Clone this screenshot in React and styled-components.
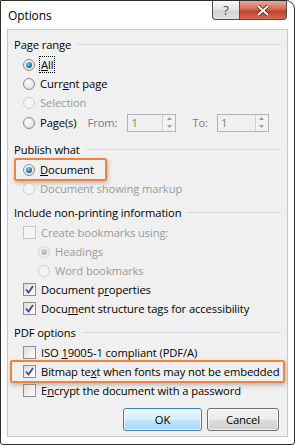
import React from 'react';
import styled, { createGlobalStyle } from 'styled-components';

const Global = createGlobalStyle`
  body {
    margin: 0;
    background: #ffffff;
    font-family: "Open Sans", "Noto Sans", sans-serif;
  }
`;

const Window = styled.div`
  width: 295px;
  height: 445px;
  box-sizing: border-box;
  border: 1px solid #2e2e2e;
  border-radius: 0 9px 3px 3px;
  background: #ffffff;
  display: flex;
  flex-direction: column;
  overflow: hidden;
`;

const TitleBar = styled.div`
  height: 28px;
  display: flex;
  align-items: flex-start;
  padding: 0 7px 0 7px;
`;

const Title = styled.div`
  flex: 1;
  font-size: 12px;
  letter-spacing: -0.1px;
  line-height: 29px;
  color: #000;
`;

const CaptionButton = styled.div`
  height: 19px;
  width: ${(p) => p.w}px;
  box-sizing: border-box;
  border: 1px solid #4f4f4f;
  border-top: none;
  display: flex;
  align-items: center;
  justify-content: center;
  background: ${(p) =>
    p.close
      ? 'linear-gradient(#e9a99b, #d0634f 50%, #c0402a 55%, #d36b58)'
      : 'linear-gradient(#f7f7f7, #e3e3e3 50%, #d2d2d2 55%, #e0e0e0)'};
  border-bottom-left-radius: ${(p) => (p.close ? 0 : 4)}px;
  border-bottom-right-radius: ${(p) => (p.close ? 4 : 0)}px;
  border-left: ${(p) => (p.close ? 'none' : '1px solid #4f4f4f')};
  font-size: 13px;
  color: #444;
`;

const Panel = styled.div`
  flex: 1;
  margin: 0 6px 7px 6px;
  border: 1px solid #c9c9c9;
  background: #f0f0f0;
  padding: 4px 6px 0 6px;
  display: flex;
  flex-direction: column;
  font-size: 11.2px;
  letter-spacing: -0.1px;
  color: #000;
`;

const Header = styled.div`
  height: 20px;
  display: flex;
  align-items: center;
  gap: 6px;
  margin-top: ${(p) => p.mt || 0}px;
  margin-bottom: 1px;

  &::after {
    content: '';
    flex: 1;
    height: 1px;
    background: #d5dce3;
  }
`;

const Row = styled.div`
  height: ${(p) => p.h || 19}px;
  display: flex;
  align-items: center;
  padding-left: ${(p) => (p.indent ? 24 : 9)}px;
  color: ${(p) => (p.disabled ? '#9a9a9a' : '#000')};
`;

const Item = styled.span`
  position: relative;
  display: inline-flex;
  align-items: center;
  gap: 5px;
`;

const Highlight = styled.span`
  position: absolute;
  left: ${(p) => p.l}px;
  right: ${(p) => p.r}px;
  top: -4px;
  bottom: -4px;
  border: 2px solid #f0833e;
  border-radius: 2px;
  box-shadow: 1px 2px 4px rgba(0, 0, 0, 0.25);
  pointer-events: none;
`;

const Radio = styled.span`
  width: 12px;
  height: 12px;
  border-radius: 50%;
  box-sizing: border-box;
  border: 1px solid ${(p) => (p.disabled ? '#cfcfcf' : '#8c8c8c')};
  background: ${(p) =>
    p.disabled
      ? '#f4f4f4'
      : 'radial-gradient(circle at 40% 35%, #ffffff, #e2e2e2 70%, #cfcfcf)'};
  display: flex;
  align-items: center;
  justify-content: center;
  flex-shrink: 0;

  &::after {
    content: '';
    display: ${(p) => (p.checked ? 'block' : 'none')};
    width: 6px;
    height: 6px;
    border-radius: 50%;
    background: ${(p) =>
      p.disabled
        ? 'radial-gradient(circle at 40% 35%, #d8d8d8, #9c9c9c)'
        : 'radial-gradient(circle at 40% 35%, #7fd0f5, #1f6fa8 60%, #0e3f6a)'};
  }
`;

const Box = styled.span`
  width: 13px;
  height: 13px;
  box-sizing: border-box;
  border: 1px solid ${(p) => (p.disabled ? '#c6c6c6' : '#8e8f8f')};
  background: ${(p) => (p.disabled ? '#f4f4f4' : 'linear-gradient(135deg, #dcdcdc, #ffffff)')};
  display: flex;
  align-items: center;
  justify-content: center;
  flex-shrink: 0;
`;

const Label = styled.span`
  white-space: nowrap;
  ${(p) => p.focus && 'outline: 1px dotted #000; outline-offset: 0px; padding: 0 1px;'}
`;

const Field = styled.span`
  display: inline-flex;
  width: ${(p) => p.w}px;
  height: 18px;
  box-sizing: border-box;
  border: 1px solid #b4b4b4;
  background: #f0f0f0;
  margin-left: ${(p) => p.ml}px;
  color: #8a7a66;
`;

const FieldText = styled.span`
  flex: 1;
  padding-left: 3px;
  line-height: 16px;
`;

const Spin = styled.span`
  width: 12px;
  border-left: 1px solid #d0d0d0;
  display: flex;
  flex-direction: column;
  justify-content: space-around;
  align-items: center;
  background: #f2f2f2;
`;

const Dim = styled.span`
  color: #7a7a7a;
  margin-left: ${(p) => p.ml}px;
`;

const Buttons = styled.div`
  display: flex;
  justify-content: flex-end;
  gap: 5px;
  margin-top: 8px;
  padding-right: 2px;
`;

const Button = styled.div`
  width: ${(p) => p.w}px;
  height: 23px;
  box-sizing: border-box;
  border-radius: 3px;
  border: 1px solid ${(p) => (p.primary ? '#3c7fb1' : '#707070')};
  background: ${(p) =>
    p.primary
      ? 'linear-gradient(#eaf6fd, #d9f0fc 50%, #bee6fd 51%, #a7d9f5)'
      : 'linear-gradient(#f2f2f2, #ebebeb 50%, #dddddd 51%, #cfcfcf)'};
  box-shadow: inset 0 0 0 1px rgba(255, 255, 255, 0.7);
  display: flex;
  align-items: center;
  justify-content: center;
`;

const Check = () => (
  <svg width="9" height="9" viewBox="0 0 9 9">
    <path d="M1 4.5 L3.5 7.5 L8 1" fill="none" stroke="#3b4f8c" strokeWidth="1.8" />
  </svg>
);

const Arrow = ({ up }) => (
  <svg width="5" height="3" viewBox="0 0 5 3">
    <path d={up ? 'M0 3 L2.5 0 L5 3 Z' : 'M0 0 L2.5 3 L5 0 Z'} fill="#9a9a9a" />
  </svg>
);

const SpinField = ({ w, ml }) => (
  <Field w={w} ml={ml}>
    <FieldText>1</FieldText>
    <Spin>
      <Arrow up />
      <Arrow />
    </Spin>
  </Field>
);

export default function App() {
  return (
    <>
      <Global />
      <Window>
        <TitleBar>
          <Title>Options</Title>
          <CaptionButton w={28}>?</CaptionButton>
          <CaptionButton w={47} close>
            <svg width="14" height="11" viewBox="0 0 14 11">
              <path d="M2 1 L12 10 M12 1 L2 10" stroke="#5a1a10" strokeWidth="3.6" />
              <path d="M2 1 L12 10 M12 1 L2 10" stroke="#ffffff" strokeWidth="2" />
            </svg>
          </CaptionButton>
        </TitleBar>
        <Panel>
          <Header>Page range</Header>
          <Row>
            <Item>
              <Radio checked />
              <Label focus><u>A</u>ll</Label>
            </Item>
          </Row>
          <Row>
            <Item>
              <Radio />
              <Label>Curr<u>e</u>nt page</Label>
            </Item>
          </Row>
          <Row disabled>
            <Item>
              <Radio disabled />
              <Label>Selection</Label>
            </Item>
          </Row>
          <Row h={21}>
            <Item>
              <Radio />
              <Label>Pa<u>g</u>e(s)</Label>
            </Item>
            <Dim ml={11}>From:</Dim>
            <SpinField w={49} ml={10} />
            <Dim ml={16}>To:</Dim>
            <SpinField w={52} ml={9} />
          </Row>

          <Header mt={6}>Publish what</Header>
          <Row>
            <Item>
              <Highlight l={-9} r={-13} />
              <Radio checked />
              <Label><u>D</u>ocument</Label>
            </Item>
          </Row>
          <Row disabled>
            <Item>
              <Radio disabled />
              <Label>Document showing markup</Label>
            </Item>
          </Row>

          <Header mt={4}>Include non-printing information</Header>
          <Row disabled>
            <Item>
              <Box disabled />
              <Label>Create bookmarks using:</Label>
            </Item>
          </Row>
          <Row disabled indent>
            <Item>
              <Radio disabled checked />
              <Label>Headings</Label>
            </Item>
          </Row>
          <Row disabled indent>
            <Item>
              <Radio disabled />
              <Label>Word bookmarks</Label>
            </Item>
          </Row>
          <Row>
            <Item>
              <Box><Check /></Box>
              <Label>Document p<u>r</u>operties</Label>
            </Item>
          </Row>
          <Row>
            <Item>
              <Box><Check /></Box>
              <Label>Docu<u>m</u>ent structure tags for accessibility</Label>
            </Item>
          </Row>

          <Header mt={4}>PDF options</Header>
          <Row>
            <Item>
              <Box />
              <Label>ISO <u>1</u>9005-1 compliant (PDF/A)</Label>
            </Item>
          </Row>
          <Row>
            <Item>
              <Highlight l={-13} r={-5} />
              <Box><Check /></Box>
              <Label>Bitmap te<u>x</u>t when fonts may not be embedded</Label>
            </Item>
          </Row>
          <Row>
            <Item>
              <Box />
              <Label>E<u>n</u>crypt the document with a password</Label>
            </Item>
          </Row>

          <Buttons>
            <Button w={79} primary>OK</Button>
            <Button w={72}>Cancel</Button>
          </Buttons>
        </Panel>
      </Window>
    </>
  );
}
